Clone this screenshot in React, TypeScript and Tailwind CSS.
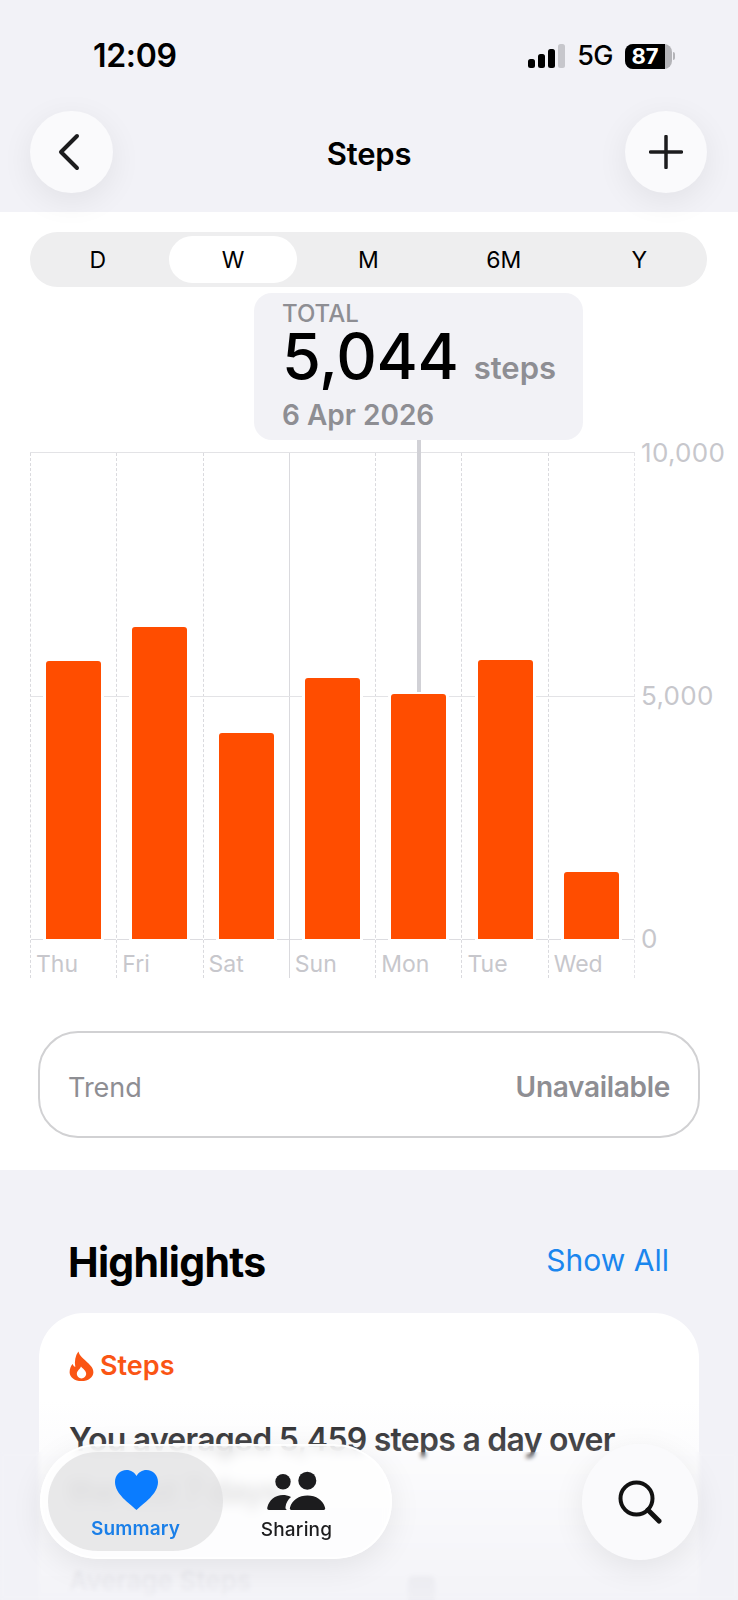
import React from 'react';

const days = [
  { label: 'Thu', bar: 'h-[278px]', line: 'border-dashed' },
  { label: 'Fri', bar: 'h-[312px]', line: 'border-dashed' },
  { label: 'Sat', bar: 'h-[206px]', line: 'border-dashed' },
  { label: 'Sun', bar: 'h-[261px]', line: 'border-solid' },
  { label: 'Mon', bar: 'h-[245px]', line: 'border-dashed' },
  { label: 'Tue', bar: 'h-[279px]', line: 'border-dashed' },
  { label: 'Wed', bar: 'h-[67px]', line: 'border-dashed' },
];

const ranges = ['D', 'W', 'M', '6M', 'Y'];

const App = () => {
  return (
    <div className="relative w-[738px] h-[1600px] overflow-hidden bg-[#f2f2f7] font-['Inter',sans-serif] text-black">
      {/* Status bar + nav */}
      <header className="h-[212px] bg-[#f2f2f7] relative z-10">
        <div className="h-[111px] flex justify-between pt-[36px] pl-[93px] pr-[63px]">
          <span className="text-[32px] leading-[40px] font-semibold tracking-[-0.3px]">12:09</span>
          <div className="flex items-center h-[40px]">
            <svg width="37" height="24" viewBox="0 0 37 24" className="-mt-[1px]">
              <rect x="0" y="15" width="7" height="9" rx="2.5" fill="#000" />
              <rect x="10" y="10" width="7" height="14" rx="2.5" fill="#000" />
              <rect x="20" y="5" width="7" height="19" rx="2.5" fill="#000" />
              <rect x="30" y="0" width="7" height="24" rx="2.5" fill="#c7c7cc" />
            </svg>
            <span className="ml-[12px] text-[27px] font-medium tracking-[-0.5px]">5G</span>
            <div className="ml-[12px] flex items-center">
              <div className="w-[47px] h-[25px] rounded-[8px] bg-[#b4b4b8]">
                <div className="w-[40px] h-[25px] bg-black rounded-l-[8px] flex items-center justify-center text-white text-[22px] leading-[25px] font-bold">
                  87
                </div>
              </div>
              <div className="w-[2px] h-[8px] ml-[1px] rounded-r-[2px] bg-[#b4b4b8]" />
            </div>
          </div>
        </div>
        <div className="flex items-center justify-between pl-[30px] pr-[31px]">
          <button className="w-[83px] h-[82px] rounded-full bg-[#fafafc] shadow-[0_8px_32px_rgba(0,0,0,0.07)] flex items-center justify-center">
            <svg width="26" height="38" viewBox="0 0 26 38" className="mr-[6px]">
              <path d="M21 3 L5 19 L21 35" fill="none" stroke="#1c1c1e" strokeWidth="4" strokeLinecap="round" strokeLinejoin="round" />
            </svg>
          </button>
          <h1 className="text-[31px] font-semibold tracking-[-0.2px] mt-[4px]">Steps</h1>
          <button className="w-[82px] h-[82px] rounded-full bg-[#fafafc] shadow-[0_8px_32px_rgba(0,0,0,0.07)] flex items-center justify-center">
            <svg width="34" height="34" viewBox="0 0 34 34">
              <path d="M17 1.5 V32.5 M1.5 17 H32.5" fill="none" stroke="#1c1c1e" strokeWidth="3.5" strokeLinecap="round" />
            </svg>
          </button>
        </div>
      </header>

      {/* Chart area */}
      <section className="h-[958px] bg-white pl-[30px] pr-[31px] pt-[20px]">
        <div className="grid grid-cols-5 h-[55px] rounded-full bg-[#eeeeef] items-center">
          {ranges.map((r) => (
            <div key={r} className="flex justify-center">
              <div
                className={
                  r === 'W'
                    ? 'w-[128px] h-[47px] rounded-full bg-white flex items-center justify-center text-[23px] pt-[2px]'
                    : 'h-[47px] flex items-center justify-center text-[23px] pt-[2px]'
                }
              >
                {r}
              </div>
            </div>
          ))}
        </div>

        <div className="relative flex items-start mt-[166px]">
          {/* horizontal grid */}
          <div className="absolute left-0 -top-[1px] w-[605px] border-t border-[#e3e3e6]" />
          <div className="absolute left-0 top-[243px] w-[605px] border-t border-[#e3e3e6]" />

          <div className="flex w-[605px] shrink-0 border-r border-dashed border-[#e4e4e8]">
            {days.map((d) => (
              <div key={d.label} className={`flex-1 flex flex-col border-l border-[#dadade] ${d.line}`}>
                <div className="h-[486px] flex items-end justify-center">
                  <div className={`relative w-[55px] rounded-t-[3px] bg-[#ff4d00] shadow-[0_0_0_3px_#ffffff] ${d.bar}`} />
                </div>
                <div className="h-[39px] border-t border-[#dcdce0] pl-[5px] text-[23px] leading-[48px] text-[#c7c7cc]">
                  {d.label}
                </div>
              </div>
            ))}
          </div>

          <div className="shrink-0 flex flex-col justify-between h-[514px] -mt-[14px] ml-[6px] text-[26px] leading-[28px] tracking-[0.3px] text-[#c7c7cc]">
            <span>10,000</span>
            <span>5,000</span>
            <span>0</span>
          </div>
        </div>

        {/* Trend */}
        <div className="ml-[8px] mr-[7px] mt-[53px] h-[107px] rounded-[40px] border-2 border-[#d1d1d3] flex items-center justify-between pl-[28px] pr-[28px] text-[27px] text-[#8e8e93]">
          <span className="mt-[7px]">Trend</span>
          <span className="mt-[5px] text-[28px] font-semibold tracking-[-0.3px]">Unavailable</span>
        </div>
      </section>

      {/* Highlights */}
      <section className="px-[39px] pt-[68px]">
        <div className="flex items-center justify-between pl-[29px] pr-[30px] h-[48px]">
          <h2 className="text-[41px] font-bold tracking-[-0.7px] mt-[1px]">Highlights</h2>
          <span className="text-[30px] text-[#1a86ee] -mt-[4px]">Show All</span>
        </div>
        <div className="mt-[27px] h-[400px] rounded-[45px] bg-white pl-[30px] pr-[30px] pt-[35px]">
          <div className="flex items-center gap-[6px] h-[36px]">
            <svg width="25" height="30" viewBox="0 0 24 29">
              <path
                fillRule="evenodd"
                d="M9 .5c1.500 4.500 3.500 5.500 7 9c4 4 7.500 6.500 7.500 11C23.500 25.500 18.500 29 12 29S.5 25.500.5 20.500c0-4 1.500-6.500 3-8c.5 1.500 1.300 2.500 2.500 3C5 10 6 4.500 9 .5ZM12 26.500c-2.500 0-4.500-2-4.500-4.500c0-3 3-4 4-7c2 2.500 5 4 5 7c0 2.500-2 4.500-4.500 4.500Z"
                fill="#fa5514"
              />
            </svg>
            <span className="text-[27px] font-semibold text-[#fa5514]">Steps</span>
          </div>
          <p className="mt-[30px] text-[32px] leading-[52px] font-semibold tracking-[-0.75px] text-[#1c1c1e]">
            You averaged 5,459 steps a day over the last 7 days.
          </p>
          <div className="mt-[43px] text-[26px] font-semibold text-[#c8c8cc]">Average Steps</div>
        </div>
      </section>

      {/* Bar behind the blur at the bottom */}
      <div className="absolute left-[408px] top-[1576px] w-[27px] h-[40px] rounded-t-[5px] bg-[#d6d6da]" />

      {/* Selection tooltip */}
      <div className="absolute left-[417px] top-[440px] w-[4px] h-[252px] bg-[#d1d1d6]" />
      <div className="absolute left-[254px] top-[293px] w-[329px] h-[147px] rounded-[18px] bg-[#f2f2f6] pl-[28px] pt-[9px]">
        <div className="text-[24px] leading-[24px] font-medium text-[#8e8e93]">TOTAL</div>
        <div className="flex items-baseline h-[64px] -mt-[2px]">
          <span className="text-[63px] leading-[64px] font-medium tracking-[-0.3px]">5,044</span>
          <span className="ml-[15px] text-[31px] font-semibold text-[#8e8e93]">steps</span>
        </div>
        <div className="mt-[10px] text-[28px] leading-[34px] font-semibold text-[#8e8e93]">6 Apr 2026</div>
      </div>

      {/* Fade + blur over the bottom of the page */}
      <div className="absolute left-0 right-0 top-[1400px] bottom-0 bg-gradient-to-b from-transparent to-[#f2f2f7]/90" />
      <div className="absolute left-0 right-0 top-[1452px] bottom-0 backdrop-blur-[2px]" />

      {/* Tab bar */}
      <nav className="absolute left-[40px] top-[1444px] w-[352px] h-[115px] rounded-full bg-white/75 backdrop-blur-[6px] border-2 border-white/90 shadow-[0_8px_32px_rgba(0,0,0,0.08)] flex items-center pl-[6px]">
        <div className="w-[175px] h-[99px] rounded-full bg-[#dedee0]/70 flex flex-col items-center text-[#1a7fe8]">
          <svg width="43" height="40" viewBox="0 0 43 40" className="mt-[18px] ml-[2px]">
            <path
              d="M21.500 40C14 33 0 24 0 12C0 5 5 0 11.500 0C16 0 19.500 2.500 21.500 6C23.500 2.500 27 0 31.500 0C38 0 43 5 43 12C43 24 29 33 21.500 40Z"
              fill="#0a7cff"
            />
          </svg>
          <span className="mt-[7px] text-[19px] leading-[24px] font-semibold tracking-[0.1px]">Summary</span>
        </div>
        <div className="flex-1 flex flex-col items-center text-[#1c1c1e] pr-[20px] pt-[8px]">
          <svg width="59" height="39" viewBox="0 0 59 39" className="mt-[1px]">
            <circle cx="16" cy="10.700" r="7.700" fill="#1c1c1e" />
            <circle cx="40.300" cy="9.700" r="9" fill="#1c1c1e" />
            <path d="M2 39C.5 39 0 38 .3 36.500C2 29 8 24 16 24C18.500 24 21 24.500 24 26C21 28.500 19 32 18.500 36C18.300 37.500 19 38.500 20 39Z" fill="#1c1c1e" />
            <path d="M24.500 39C23 39 22.500 38 23 36.500C25 29 32 24.500 40.500 24.500C49 24.500 56 29 58 36.500C58.500 38 58 39 56.500 39Z" fill="#1c1c1e" />
          </svg>
          <span className="mt-[8px] text-[19px] leading-[24px] font-medium tracking-[0.2px]">Sharing</span>
        </div>
      </nav>

      <button className="absolute left-[582px] top-[1444px] w-[116px] h-[116px] rounded-full bg-[#fafafc] shadow-[0_8px_32px_rgba(0,0,0,0.08)] flex items-center justify-center">
        <svg width="44" height="44" viewBox="0 0 44 44">
          <circle cx="18.500" cy="18.500" r="16" fill="none" stroke="#111" strokeWidth="4" />
          <path d="M30 30 L41 41" stroke="#111" strokeWidth="5" strokeLinecap="round" />
        </svg>
      </button>
    </div>
  );
};

export default App;
